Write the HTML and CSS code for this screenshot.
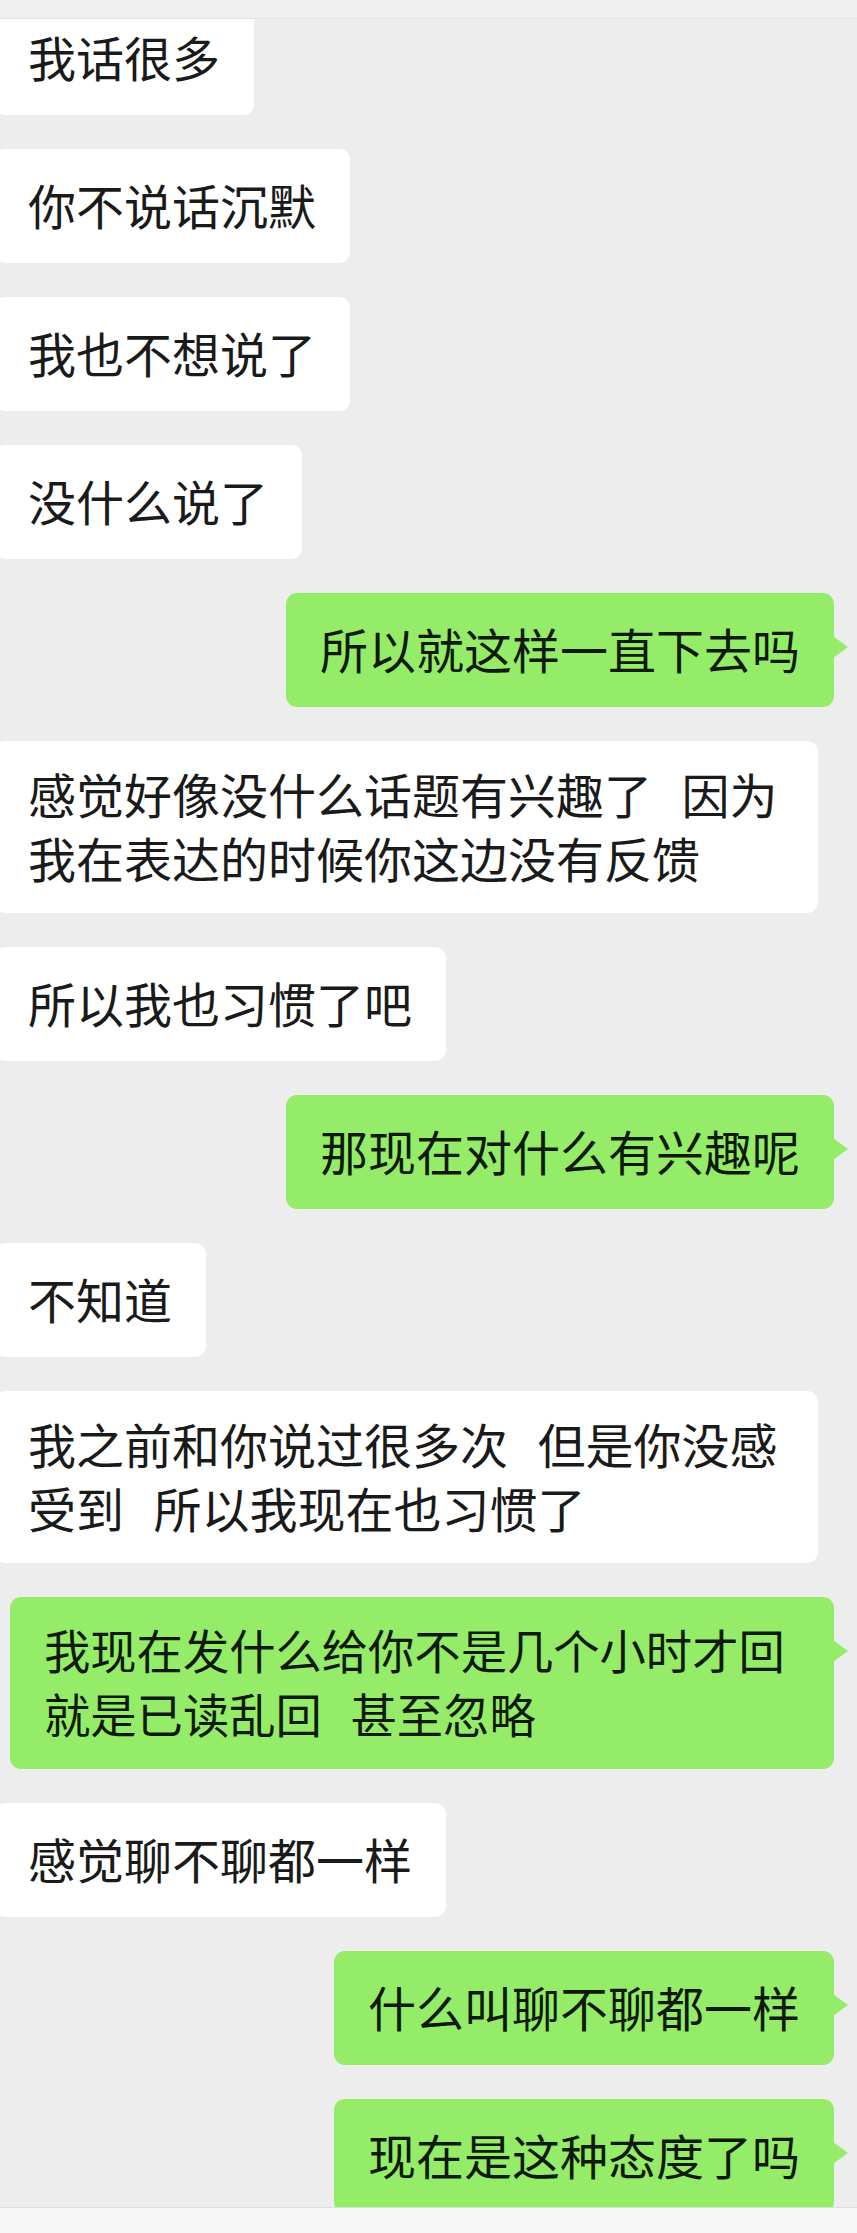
FILE: index.html
```html
<!DOCTYPE html>
<html lang="zh-CN">
<head>
<meta charset="utf-8">
<title>聊天记录</title>
<link rel="stylesheet" href="styles.css">
</head>
<body>
<div class="chat">
  <div class="topbar"></div>
  <div class="list">
    <div class="row left"><div class="bubble">我话很多</div></div>
    <div class="row left"><div class="bubble">你不说话沉默</div></div>
    <div class="row left"><div class="bubble">我也不想说了</div></div>
    <div class="row left"><div class="bubble">没什么说了</div></div>
    <div class="row right"><div class="bubble">所以就这样一直下去吗</div></div>
    <div class="row left"><div class="bubble multi">感觉好像没什么话题有兴趣了  因为我在表达的时候你这边没有反馈</div></div>
    <div class="row left"><div class="bubble">所以我也习惯了吧</div></div>
    <div class="row right"><div class="bubble">那现在对什么有兴趣呢</div></div>
    <div class="row left"><div class="bubble">不知道</div></div>
    <div class="row left"><div class="bubble multi">我之前和你说过很多次  但是你没感受到  所以我现在也习惯了</div></div>
    <div class="row right"><div class="bubble multi compact">我现在发什么给你不是几个小时才回就是已读乱回  甚至忽略</div></div>
    <div class="row left"><div class="bubble">感觉聊不聊都一样</div></div>
    <div class="row right"><div class="bubble">什么叫聊不聊都一样</div></div>
    <div class="row right"><div class="bubble">现在是这种态度了吗</div></div>
  </div>
  <div class="inputbar"></div>
</div>
</body>
</html>
```

FILE: styles.css
```css
html, body {
  margin: 0;
  padding: 0;
  background: #ededed;
}

.chat {
  position: relative;
  width: 857px;
  height: 2233px;
  overflow: hidden;
  background: #ededed;
  font-family: "Noto Sans CJK SC", "Noto Sans", sans-serif;
}

.topbar {
  position: absolute;
  top: 0;
  left: 0;
  right: 0;
  height: 18px;
  background: #efefef;
  border-bottom: 1px solid #e2e2e2;
  z-index: 2;
}

.inputbar {
  position: absolute;
  left: 0;
  right: 0;
  bottom: 0;
  height: 25px;
  background: #f7f7f7;
  border-top: 1px solid #dedede;
  z-index: 2;
}

.list {
  display: flex;
  flex-direction: column;
  gap: 34px;
  padding-top: 1px;
}

.row {
  display: flex;
}

.row.left {
  justify-content: flex-start;
}

.row.right {
  justify-content: flex-end;
  padding-right: 23px;
}

.bubble {
  position: relative;
  box-sizing: border-box;
  font-size: 48px;
  line-height: 64px;
  white-space: pre-wrap;
  word-spacing: 4px;
  border-radius: 11px;
  padding: 23px 34px 27px 34px;
  max-width: 824px;
}

.bubble.multi {
  padding-top: 20px;
  padding-bottom: 24px;
}

.bubble.compact {
  font-size: 46.3px;
}

.left .bubble {
  background: #ffffff;
  color: #1a1a1a;
  margin-left: -6px;
}

.right .bubble {
  background: #95ec69;
  color: #0f1a0a;
}

.right .bubble::after {
  content: "";
  position: absolute;
  right: -14px;
  top: 43px;
  width: 0;
  height: 0;
  border-top: 11px solid transparent;
  border-bottom: 11px solid transparent;
  border-left: 15px solid #95ec69;
}
```
